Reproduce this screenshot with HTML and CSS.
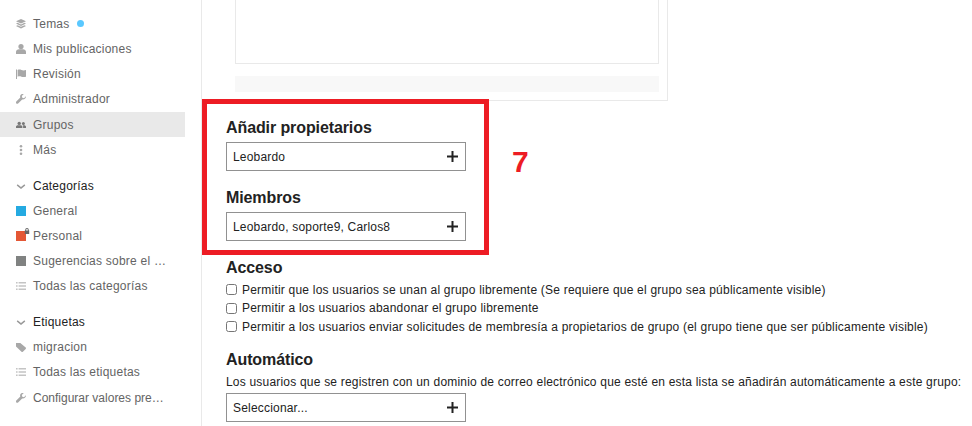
FILE: index.html
```html
<!DOCTYPE html>
<html lang="es">
<head>
<meta charset="utf-8">
<title>Grupos</title>
<link rel="stylesheet" href="styles.css">
</head>
<body>
<svg class="defs" width="0" height="0" aria-hidden="true">
  <symbol id="wrench" viewBox="0 0 10 10"><path d="M10 2.200 8 4.200 6.300 3.700 5.800 2 7.800 0C6.400-.4 5 .1 4.400 1.200 4 2 4 2.900 4.300 3.600L.3 7.600c-.5.500-.4 1.300 0 1.800.5.500 1.300.5 1.800.1l4.100-4.100c.8.300 1.600.2 2.400-.3 1.100-.7 1.600-1.900 1.400-2.900z"/></symbol>
  <symbol id="list" viewBox="0 0 10 10"><path d="M0 1h1.600v1.400H0zM0 4.300h1.600v1.400H0zM0 7.600h1.600V9H0zM2.600 1H10v1.400H2.600zM2.600 4.300H10v1.400H2.600zM2.600 7.600H10V9H2.600z"/></symbol>
  <symbol id="chev" viewBox="0 0 10 10"><path d="M1.600 3.300 5 6 8.400 3.300l.9 1.200L5 8 .7 4.500z"/></symbol>
  <symbol id="plus" viewBox="0 0 11 11"><path d="M4.500 0h2v4.500H11v2H6.500V11h-2V6.500H0v-2h4.500z"/></symbol>
</svg>
<div class="layout">
  <nav class="sidebar">
    <ul class="nav-list">
      <li class="nav-item"><svg class="ico" viewBox="0 0 10 10"><path d="M5 0 10 2.300 5 4.600 0 2.300zM1.600 3.800 5 5.400 8.400 3.800 10 4.600 5 7 0 4.600zM1.600 6.200 5 7.800 8.400 6.200 10 7 5 9.400 0 7z"/></svg><span>Temas</span><i class="dot"></i></li>
      <li class="nav-item"><svg class="ico" viewBox="0 0 10 10"><circle cx="5" cy="2.600" r="2.600"/><path d="M0 10V8c0-1.800 1.500-2.800 3-2.800h4c1.500 0 3 1 3 2.800v2z"/></svg><span>Mis publicaciones</span></li>
      <li class="nav-item"><svg class="ico" viewBox="0 0 10 10"><path d="M0 .5h1v9.500H0zM1.600 1c1.400-.7 2.600-.5 3.800 0s2.900.6 4.600 0v6.700c-1.700.6-3.300.5-4.600 0S3 7.100 1.600 7.800z"/></svg><span>Revisión</span></li>
      <li class="nav-item"><svg class="ico"><use href="#wrench"/></svg><span>Administrador</span></li>
      <li class="nav-item is-active"><svg class="ico ico-dark" viewBox="0 0 10 10"><circle cx="3.200" cy="3.400" r="1.700"/><circle cx="7.400" cy="3.400" r="1.500"/><path d="M0 8V6.800c0-1 1-1.500 2-1.500h2.400c1 0 2 .5 2 1.500V8zM7.100 8V6.600c0-.5-.2-.9-.5-1.300h1.400c1 0 2 .5 2 1.500V8z"/></svg><span>Grupos</span></li>
      <li class="nav-item"><svg class="ico" viewBox="0 0 10 10"><circle cx="5" cy="1.300" r="1.300"/><circle cx="5" cy="5" r="1.300"/><circle cx="5" cy="8.700" r="1.300"/></svg><span>Más</span></li>
    </ul>
    <h3 class="nav-head"><svg class="chev"><use href="#chev"/></svg><span>Categorías</span></h3>
    <ul class="nav-list">
      <li class="nav-item"><i class="swatch swatch-blue"></i><span>General</span></li>
      <li class="nav-item"><i class="swatch swatch-red"><svg class="lock" viewBox="0 0 6 6"><path d="M1.200 2.600V1.900a1.800 1.800 0 0 1 3.600 0v.7h.4V6H.8V2.600zM2.100 2.600h1.800V1.900a.9.900 0 0 0-1.800 0z"/></svg></i><span>Personal</span></li>
      <li class="nav-item"><i class="swatch swatch-grey"></i><span>Sugerencias sobre el …</span></li>
      <li class="nav-item"><svg class="ico ico-light"><use href="#list"/></svg><span>Todas las categorías</span></li>
    </ul>
    <h3 class="nav-head"><svg class="chev"><use href="#chev"/></svg><span>Etiquetas</span></h3>
    <ul class="nav-list">
      <li class="nav-item"><svg class="ico" viewBox="0 0 10 10"><path d="M0 1h4.300L9.700 5.500c.4.400.4 1 0 1.400L6.900 9.700c-.4.400-1 .4-1.400 0L0 4.500z"/></svg><span>migracion</span></li>
      <li class="nav-item"><svg class="ico ico-light"><use href="#list"/></svg><span>Todas las etiquetas</span></li>
      <li class="nav-item"><svg class="ico"><use href="#wrench"/></svg><span class="tight">Configurar valores pre…</span></li>
    </ul>
  </nav>
  <main class="main">
    <div class="card">
      <div class="card-editor"></div>
      <div class="card-bar"></div>
    </div>
    <form class="form">
      <h2 class="form-title">Añadir propietarios</h2>
      <div class="picker"><span>Leobardo</span><svg class="plus"><use href="#plus"/></svg></div>
      <h2 class="form-title form-title-second">Miembros</h2>
      <div class="picker"><span>Leobardo, soporte9, Carlos8</span><svg class="plus"><use href="#plus"/></svg></div>
      <h2 class="form-title form-title-access">Acceso</h2>
      <div class="checks">
        <label class="check"><input type="checkbox"><span>Permitir que los usuarios se unan al grupo libremente (Se requiere que el grupo sea públicamente visible)</span></label>
        <label class="check"><input type="checkbox"><span>Permitir a los usuarios abandonar el grupo libremente</span></label>
        <label class="check"><input type="checkbox"><span>Permitir a los usuarios enviar solicitudes de membresía a propietarios de grupo (el grupo tiene que ser públicamente visible)</span></label>
      </div>
      <h2 class="form-title form-title-auto">Automático</h2>
      <p class="form-help">Los usuarios que se registren con un dominio de correo electrónico que esté en esta lista se añadirán automáticamente a este grupo:</p>
      <div class="picker picker-auto"><span>Seleccionar...</span><svg class="plus"><use href="#plus"/></svg></div>
    </form>
  </main>
</div>
<div class="callout"></div>
<div class="callout-number">7</div>
</body>
</html>
```
FILE: styles.css
```css
* { box-sizing: border-box; }
html, body { margin: 0; height: 426px; overflow: hidden; background: #fff; }
body { font-family: "Liberation Sans", Arial, sans-serif; font-size: 12px; color: #222; position: relative; }
.defs { position: absolute; }
.layout { display: flex; height: 426px; }
.sidebar { width: 202px; flex: none; height: 426px; padding: 11.300px 16px 0 0; border-right: 1px solid #e9e9e9; }
.nav-list { list-style: none; margin: 0; padding: 0; }
.nav-item { display: flex; align-items: center; height: 25.200px; padding-left: 16px; color: #646464; letter-spacing: .23px; white-space: nowrap; }
.nav-item.is-active { background: #e9e9e9; }
.tight { letter-spacing: 0; }
.ico { width: 10px; height: 10px; margin-right: 7px; fill: #a8a8a8; flex: none; }
.ico-dark { fill: #777; }
.ico-light { fill: #c4c4c4; }
.dot { width: 7px; height: 7px; border-radius: 50%; background: #5ac8ff; margin-left: 7px; }
.swatch { width: 10px; height: 10px; margin-right: 7px; flex: none; position: relative; }
.swatch-blue { background: #25aae1; }
.swatch-red { background: #e45735; }
.swatch-grey { background: #808281; }
.lock { position: absolute; right: -4px; top: -3px; width: 6px; height: 6px; fill: #666; }
.nav-head { display: flex; align-items: center; height: 25.200px; margin: 10.500px 0 0; padding-left: 16px; font-size: 12px; font-weight: 400; color: #222; letter-spacing: .23px; }
.chev { width: 10px; height: 10px; margin-right: 7px; fill: #999; flex: none; }
.main { flex: 1; min-width: 0; padding-left: 24px; }
.card { width: 442px; height: 101px; padding: 0 8px 0 9px; border-right: 1px solid #e9e9e9; border-bottom: 1px solid #e9e9e9; }
.card-editor { height: 64px; border: 1px solid #e9e9e9; border-top: 0; }
.card-bar { height: 16px; margin-top: 12px; background: #f8f8f8; }
.form { padding-top: 17px; }
.form-title { margin: 0; font-size: 16px; line-height: 19px; font-weight: 700; color: #222; letter-spacing: -.1px; }
.form-title-second { margin-top: 17px; }
.form-title-access { margin-top: 17px; }
.form-title-auto { margin-top: 14px; }
.picker { display: flex; align-items: center; justify-content: space-between; width: 240px; height: 29px; margin-top: 5px; padding: 0 7px 0 6px; border: 1px solid #919191; color: #222; letter-spacing: .19px; white-space: nowrap; }
.picker-auto { margin-top: 4px; }
.plus { width: 11px; height: 11px; fill: #222; }
.checks { padding-top: 3.500px; }
.check { display: flex; align-items: center; height: 18.500px; color: #222; letter-spacing: .21px; white-space: nowrap; }
.check input { width: 11px; height: 11px; margin: 0 5px 0 0; }
.form-help { margin: 6px 0 0; line-height: 14px; color: #222; letter-spacing: .2px; white-space: nowrap; }
.callout { position: absolute; left: 202px; top: 99px; width: 287px; height: 156px; border: 5px solid #ed1c24; }
.callout-number { position: absolute; left: 512px; top: 145px; font-family: "Liberation Sans", Arial, sans-serif; font-weight: 700; font-size: 30px; line-height: 34px; color: #ed1c24; }
```
